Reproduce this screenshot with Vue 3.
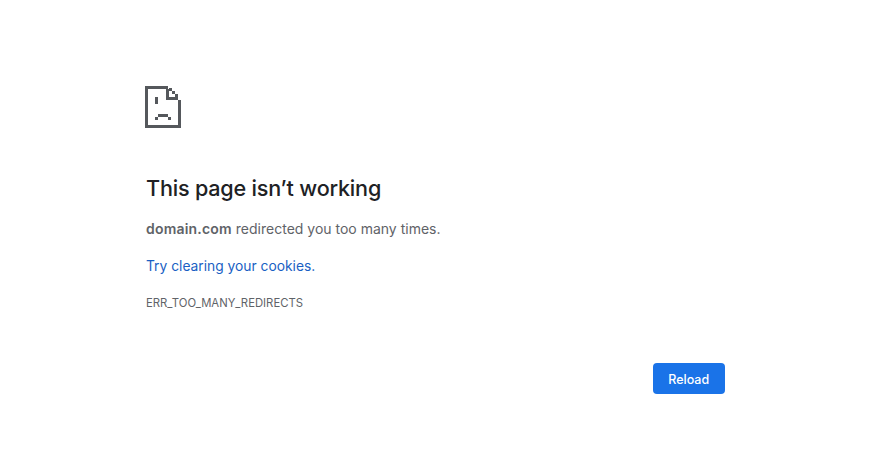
<template>
  <div class="page">
    <main class="content">
      <svg class="icon" width="36" height="42" viewBox="0 0 36 42" aria-hidden="true">
        <path d="M0 0H23V3H3V39H33V14H36V42H0Z" fill="#55585c" />
        <path d="M21 3H24V11H33V14H21Z" fill="#55585c" />
        <rect x="24" y="2" width="3" height="3" fill="#55585c" />
        <rect x="27" y="5" width="3" height="3" fill="#55585c" />
        <rect x="30" y="8" width="3" height="3" fill="#55585c" />
        <rect x="10" y="11" width="3" height="7" fill="#55585c" />
        <rect x="13" y="28" width="10" height="3" fill="#55585c" />
        <rect x="10" y="31" width="3" height="3" fill="#55585c" />
        <rect x="23" y="31" width="3" height="3" fill="#55585c" />
      </svg>

      <h1>This page isn’t working</h1>
      <p class="message"><strong>domain.com</strong> redirected you too many times.</p>
      <p class="hint"><a href="#" @click.prevent>Try clearing your cookies</a>.</p>
      <p class="code">ERR_TOO_MANY_REDIRECTS</p>

      <div class="actions">
        <button type="button">Reload</button>
      </div>
    </main>
  </div>
</template>

<script setup>
</script>

<style scoped>
.page {
  width: 870px;
  height: 460px;
  background: #fff;
  font-family: Inter, "Liberation Sans", sans-serif;
  overflow: hidden;
}

.content {
  width: 578.5px;
  padding: 86px 0 0 146px;
}

.icon {
  display: block;
  margin-left: -1px;
  shape-rendering: crispEdges;
}

h1 {
  margin: 46px 0 0;
  font-size: 21.6px;
  line-height: 28px;
  font-weight: 500;
  letter-spacing: -0.2px;
  color: #202124;
}

.message {
  margin: 17px 0 0;
  font-size: 14px;
  line-height: 20px;
  color: #5f6368;
}

.message strong {
  font-weight: 600;
  letter-spacing: 0.2px;
}

.hint {
  margin: 17px 0 0;
  font-size: 13.8px;
  line-height: 20px;
  color: #1a5fc4;
}

.hint a {
  color: #1a5fc4;
  text-decoration: none;
}

.code {
  margin: 20px 0 0;
  font-size: 11.3px;
  line-height: 14px;
  color: #5f6368;
}

.actions {
  display: flex;
  justify-content: flex-end;
  margin-top: 53px;
}

button {
  width: 71.5px;
  height: 31px;
  padding: 1px 0 0;
  border: none;
  border-radius: 4px;
  background: #1a73e8;
  color: #fff;
  font-family: inherit;
  font-size: 12.5px;
  font-weight: 500;
  cursor: pointer;
}
</style>
